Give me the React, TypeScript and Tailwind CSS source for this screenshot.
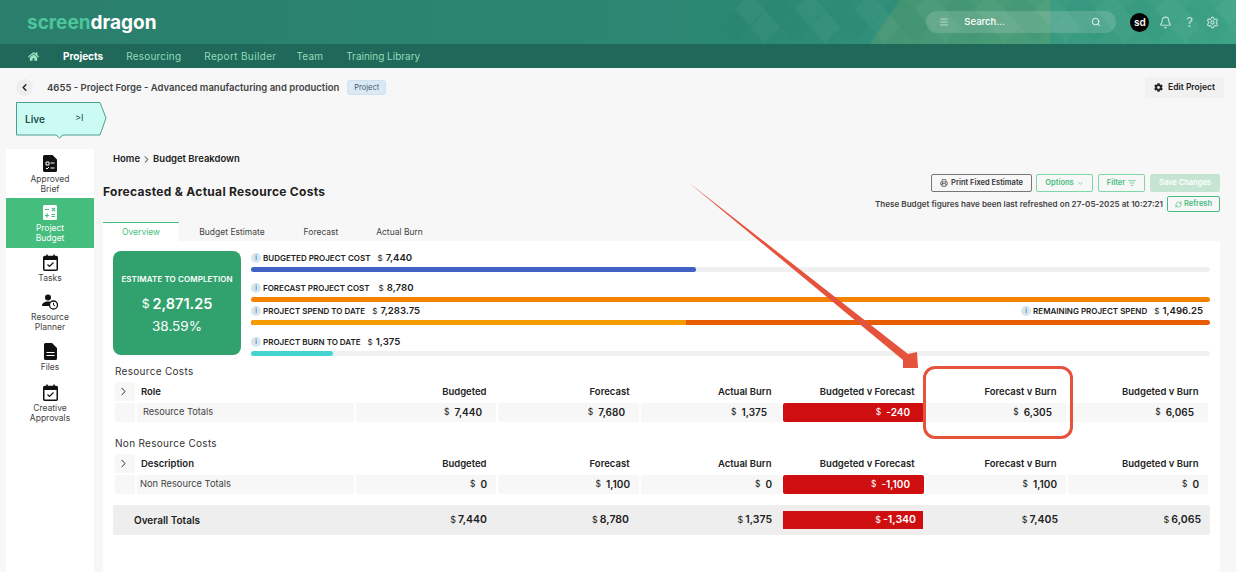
import { ChevronDown, ChevronLeft, ChevronRight, RefreshCw, Search, Bell, Settings, Menu, Printer, ListFilter } from 'lucide-react';
import { FaCog, FaHome } from 'react-icons/fa';

const gridCols = 'grid grid-cols-[20px_217px_140px_141px_140px_141px_140px_140px] gap-x-[2px]';

function BriefIcon() {
  return (
    <svg width="14" height="17" viewBox="0 0 14 17">
      <path d="M1.5 0H9.5L14 4.5V15.5A1.5 1.5 0 0 1 12.5 17H1.5A1.5 1.5 0 0 1 0 15.5V1.5A1.5 1.5 0 0 1 1.5 0Z" fill="#111" />
      <path d="M3 7h3v3H3zM7.5 8h4M3 13l1 1 2-2M7.5 13h4" stroke="#fff" strokeWidth="1" fill="none" />
    </svg>
  );
}

function CalcIcon() {
  return (
    <svg width="14" height="15" viewBox="0 0 14 15">
      <rect width="14" height="15" rx="1.5" fill="#fff" />
      <path d="M2 4.5h4M9 3l3 3M12 3l-3 3M2 10.5h4M4 8.5v4M8.5 9.5h3.5M8.5 11.5h3.5" stroke="#45bd7c" strokeWidth="1.2" fill="none" />
    </svg>
  );
}

function CalendarIcon() {
  return (
    <svg width="15" height="17" viewBox="0 0 15 17">
      <rect x="0.75" y="2.5" width="13.5" height="13.75" rx="1" fill="none" stroke="#111" strokeWidth="1.5" />
      <path d="M0.75 3h13.5v3H0.75z" fill="#111" />
      <path d="M4 0.5v3M11 0.5v3" stroke="#111" strokeWidth="1.5" />
      <path d="M4.5 10.5l2 2 4-4" stroke="#111" strokeWidth="1.2" fill="none" />
    </svg>
  );
}

function PlannerIcon() {
  return (
    <svg width="16" height="16" viewBox="0 0 16 16">
      <circle cx="6" cy="3.5" r="3" fill="#111" />
      <path d="M0 12c0-3 2.5-4.5 6-4.5 1 0 2 .1 2.6.4A5 5 0 0 0 7.2 12Z" fill="#111" />
      <circle cx="11.5" cy="11" r="4" fill="#fff" stroke="#111" strokeWidth="1.3" />
      <path d="M11.5 8.8V11l1.6 1" stroke="#111" strokeWidth="1" fill="none" />
    </svg>
  );
}

function FileIcon() {
  return (
    <svg width="13" height="17" viewBox="0 0 13 17">
      <path d="M1.5 0H8L13 5V15.5A1.5 1.5 0 0 1 11.5 17H1.5A1.5 1.5 0 0 1 0 15.5V1.5A1.5 1.5 0 0 1 1.5 0Z" fill="#111" />
      <path d="M2.5 9.5h8M2.5 12.5h8" stroke="#fff" strokeWidth="1.2" />
    </svg>
  );
}

const sideItems = [
  { label: ['Approved', 'Brief'], icon: <BriefIcon />, h: 'h-[49px]' },
  { label: ['Project', 'Budget'], icon: <CalcIcon />, h: 'h-[50px]', active: true },
  { label: ['Tasks'], icon: <CalendarIcon />, h: 'h-[39px]' },
  { label: ['Resource', 'Planner'], icon: <PlannerIcon />, h: 'h-[50px]' },
  { label: ['Files'], icon: <FileIcon />, h: 'h-[41px]' },
  { label: ['Creative', 'Approvals'], icon: <CalendarIcon />, h: 'h-[50px]' },
];

function Sidebar() {
  return (
    <div className="ml-[6px] w-[88px] h-[423px] bg-white shrink-0">
      {sideItems.map((item) => (
        <div
          key={item.label[0]}
          className={`${item.h} pt-[6px] flex flex-col items-center ${item.active ? 'bg-[#45bd7c] text-white' : 'text-[#444]'}`}
        >
          <div className="h-[17px] flex items-center justify-center">{item.icon}</div>
          <div className="mt-[2px] text-center text-[8.5px] leading-[10px]">
            {item.label.map((l) => (
              <div key={l}>{l}</div>
            ))}
          </div>
        </div>
      ))}
    </div>
  );
}

function Money({ value, size = 'text-[10px]', light = false, gap = 'gap-[5px]' }: { value: string; size?: string; light?: boolean; gap?: string }) {
  return (
    <span className={`inline-flex items-center font-semibold ${gap} ${size} ${light ? 'text-white' : 'text-[#222]'}`}>
      <span className="font-normal text-[0.85em]">$</span>
      {value}
    </span>
  );
}

function Info() {
  return (
    <span className="w-[10px] h-[10px] rounded-full bg-[#d5e6f3] text-[#33576f] text-[7px] leading-[10px] text-center shrink-0">i</span>
  );
}

function BarLabel({ label, value, mr = 'mr-[5px]' }: { label: string; value: string; mr?: string }) {
  return (
    <span className="flex items-center gap-[2px]">
      <Info />
      <span className={`text-[8px] font-semibold text-[#222] ${mr}`}>{label}</span>
      <Money value={value} size="text-[9.6px]" gap="gap-[3px]" />
    </span>
  );
}

function CostTable({ title, first, total, values, mt, pad }: { title: string; first: string; total: string; values: string[]; mt: string; pad: string }) {
  const heads = ['Budgeted', 'Forecast', 'Actual Burn', 'Budgeted v Forecast', 'Forecast v Burn', 'Budgeted v Burn'];
  return (
    <div className={mt}>
      <div className="h-[16px] text-[10px] leading-[16px] text-[#333] tracking-[0.3px]">{title}</div>
      <div className={`${gridCols} mt-[3px] h-[19px] items-center text-[9.5px] font-semibold text-[#222]`}>
        <div className="h-[19px] bg-[#f7f7f7] rounded-[2px] flex items-center justify-center">
          <ChevronRight size={13} strokeWidth={1.8} className="-ml-[3px]" />
        </div>
        <div className="pl-[4px] pt-[1px]">{first}</div>
        {heads.map((h) => (
          <div key={h} className="text-right pr-[9.5px] pt-[1px]">{h}</div>
        ))}
      </div>
      <div className={`${gridCols} mt-[2px] h-[19px] text-[9.3px]`}>
        <div className="bg-[#f7f7f7] rounded-[2px]" />
        <div className={`bg-[#f7f7f7] rounded-[2px] flex items-center pb-[1px] text-[#444] ${pad}`}>{total}</div>
        {values.map((v, i) =>
          i === 3 ? (
            <div key={i} className="bg-[#cf0e10] rounded-[2px] flex items-center justify-end pb-[1px] pr-[14px]">
              <Money value={v} light />
            </div>
          ) : (
            <div key={i} className={`bg-[#f7f7f7] rounded-[2px] flex items-center justify-end pb-[1px] ${v === '0' || v === '1,100' ? 'pr-[9px]' : 'pr-[14px]'}`}>
              <Money value={v} />
            </div>
          )
        )}
      </div>
    </div>
  );
}

// soft diamonds at the right of the header
const diamonds = Array.from({ length: 18 }, (_, i) => i);

function HeaderPattern() {
  return (
    <svg className="absolute left-[720px] top-0" width="516" height="44" viewBox="0 0 516 44">
      <path d="M180 0H330V44H150Z" fill="#8fae64" fillOpacity="0.22" />
      {diamonds.map((i) => (
        <g key={i}>
          <path d={`M${i * 30 + 15} 10Q${i * 30 + 22} 20 ${i * 30 + 30} 27Q${i * 30 + 22} 34 ${i * 30 + 15} 44Q${i * 30 + 8} 34 ${i * 30} 27Q${i * 30 + 8} 20 ${i * 30 + 15} 10Z`} fill={i % 2 ? '#ffffff' : '#0b5f4f'} fillOpacity={0.035} />
          <path d={`M${i * 30 + 30} -8Q${i * 30 + 37} 2 ${i * 30 + 45} 9Q${i * 30 + 37} 16 ${i * 30 + 30} 26Q${i * 30 + 23} 16 ${i * 30 + 15} 9Q${i * 30 + 23} 2 ${i * 30 + 30} -8Z`} fill={i % 2 ? '#0b5f4f' : '#ffffff'} fillOpacity={0.035} />
        </g>
      ))}
    </svg>
  );
}

export default function App() {
  const overall = ['7,440', '8,780', '1,375', '-1,340', '7,405', '6,065'];
  const overallPad = ['pr-[10px]', 'pr-[10px]', 'pr-[11px]', 'pr-[7px]', 'pr-[8px]', 'pr-[9px]'];
  return (
    <div className={'relative w-[1236px] h-[572px] overflow-hidden bg-[#f7f7f7] font-["Inter",sans-serif]'}>
      {/* header */}
      <div className="relative h-[44px] bg-gradient-to-r from-[#2a7f6c] via-[#2b8873] via-60% to-[#3fa487] flex items-center overflow-hidden">
        <HeaderPattern />
        <div className="relative ml-[27px] text-[19px] font-bold leading-none">
          <span className="text-[#4dc69b]">screen</span>
          <span className="text-white">dragon</span>
        </div>
        <div className="relative ml-auto mr-[17px] flex items-center">
          <div className="w-[190px] h-[22px] rounded-full bg-white/15 flex items-center pl-[13px] pr-[15px] text-white text-[9.5px] font-medium">
            <Menu size={10} className="text-white/70" />
            <span className="ml-[15px]">Search...</span>
            <Search size={10} className="ml-auto" />
          </div>
          <div className="ml-[14px] w-[19px] h-[19px] rounded-full bg-black text-white text-[10px] font-semibold flex items-center justify-center">sd</div>
          <Bell size={13} className="ml-[10px] text-white/70" />
          <span className="ml-[14px] text-[13px] text-white/70 leading-none">?</span>
          <Settings size={13} className="ml-[13px] text-white/70" />
        </div>
      </div>
      {/* nav */}
      <div className="h-[24px] bg-[#20695a] flex items-center pl-[28px] text-[10px] text-[#8fdcb8]">
        <FaHome size={11} className="text-[#9be6c2]" />
        <span className="ml-[24px] font-bold text-white">Projects</span>
        <span className="ml-[23px] tracking-[0.2px]">Resourcing</span>
        <span className="ml-[23px] tracking-[0.35px]">Report Builder</span>
        <span className="ml-[20px] tracking-[0.2px]">Team</span>
        <span className="ml-[23px]">Training Library</span>
      </div>

      {/* project title */}
      <div className="mt-[9px] h-[21px] flex items-center pl-[16px] pr-[12px]">
        <div className="w-[17px] h-[17px] rounded-full bg-[#eeeeee] flex items-center justify-center">
          <ChevronLeft size={11} strokeWidth={3} className="text-[#222]" />
        </div>
        <span className="ml-[14px] mt-[1px] text-[9.5px] font-semibold text-[#444]">4655 - Project Forge - Advanced manufacturing and production</span>
        <span className="ml-[8px] h-[15px] px-[6px] rounded-[3px] bg-[#dbe9f5] border border-[#cfe0ef] text-[7.5px] leading-[13px] text-[#3d5a73]">Project</span>
        <button className="ml-auto w-[79px] h-[21px] rounded-[2px] bg-[#f1f1f1] flex items-center justify-center gap-[5px] text-[8.5px] font-semibold text-[#222]">
          <FaCog size={9} />
          Edit Project
        </button>
      </div>

      {/* status chevron */}
      <div className="relative mt-[4px] ml-[16px] w-[91px] h-[33px]">
        <svg className="absolute inset-0 overflow-visible" width="91" height="33" viewBox="0 0 91 33">
          <path d="M0.5 0.5H84L90 16L84 33H47L43.5 36L40 33H0.5Z" fill="#cbfbf3" stroke="#4da08d" strokeWidth="1" />
        </svg>
        <span className="absolute left-[9px] top-[10px] text-[10px] font-semibold text-[#1d4f47]">Live</span>
        <span className="absolute left-[59px] top-[9px] text-[9px] text-[#1d4f47]">&gt;I</span>
      </div>

      <div className="mt-[14px] flex">
        <Sidebar />
        <div className="ml-[9px] w-[1117px]">
          <div className="pl-[10px] h-[20px] flex items-center gap-[1px] text-[9.5px] font-semibold text-[#222]">
            Home <ChevronRight size={11} /> Budget Breakdown
          </div>
          {/* title + actions */}
          <div className="mt-[5px] h-[38px] flex">
            <div className="pt-[9px] text-[12px] font-bold text-[#222] tracking-[0.3px]">Forecasted &amp; Actual Resource Costs</div>
            <div className="ml-auto flex flex-col items-end">
              <div className="flex text-[7.5px] font-semibold">
                <button className="w-[101px] h-[18px] rounded-[2px] border border-[#777] flex items-center justify-center gap-[3px] text-[#333]">
                  <Printer size={8} />
                  Print Fixed Estimate
                </button>
                <button className="ml-[4px] w-[57px] h-[18px] rounded-[2px] border border-[#7fd6a6] flex items-center justify-center gap-[3px] text-[#45bd7c]">
                  Options <ChevronDown size={7} />
                </button>
                <button className="ml-[5px] w-[47px] h-[18px] rounded-[2px] border border-[#7fd6a6] flex items-center justify-center gap-[3px] text-[#45bd7c]">
                  Filter <ListFilter size={8} />
                </button>
                <button className="ml-[5px] w-[70px] h-[18px] rounded-[2px] bg-[#c5e5d2] text-white">Save Changes</button>
              </div>
              <div className="mt-[4px] flex items-center gap-[4px] text-[8.1px] font-semibold text-[#444]">
                These Budget figures have been last refreshed on 27-05-2025 at 10:27:21
                <button className="w-[53px] h-[16px] rounded-[2px] border border-[#45bd7c] flex items-center justify-center gap-[2px] text-[7.5px] text-[#45bd7c]">
                  <RefreshCw size={7} /> Refresh
                </button>
              </div>
            </div>
          </div>
          {/* tabs */}
          <div className="mt-[10px] h-[19px] flex text-[8.5px] text-[#444]">
            <div className="w-[76px] pt-[1px] border-t border-[#45bd7c] bg-white text-[#45bd7c] flex items-center justify-center">Overview</div>
            <div className="w-[106px] pt-[1px] flex items-center justify-center">Budget Estimate</div>
            <div className="w-[72px] pt-[1px] flex items-center justify-center">Forecast</div>
            <div className="w-[85px] pt-[1px] flex items-center justify-center">Actual Burn</div>
          </div>
          {/* panel */}
          <div className="bg-white h-[331px] pl-[10px] pr-[10px] pt-[10px]">
            <div className="flex">
              <div className="w-[128px] h-[104px] rounded-[8px] bg-[#31a26e] text-white flex flex-col items-center pt-[22px]">
                <div className="text-[8px] font-semibold tracking-[0.1px]">ESTIMATE TO COMPLETION</div>
                <div className="mt-[5px]"><Money value="2,871.25" size="text-[14.5px]" light gap="gap-[3px]" /></div>
                <div className="mt-[2px] text-[13.5px] leading-[18px]">38.59%</div>
              </div>
              <div className="ml-[10px] flex-1">
                <div className="h-[14px] flex items-center"><BarLabel label="BUDGETED PROJECT COST" value="7,440" /></div>
                <div className="mt-[2px] h-[5px] rounded-full bg-[#f0f0f0]">
                  <div className="h-full rounded-full bg-[#3f62c4]" style={{ width: '46.4%' }} />
                </div>
                <div className="mt-[9px] h-[14px] flex items-center"><BarLabel label="FORECAST PROJECT COST" value="8,780" mr="mr-[7px]" /></div>
                <div className="mt-[2px] h-[5px] rounded-full bg-[#f58200]" />
                <div className="mt-[2px] h-[15px] flex items-center justify-between pr-[7px]">
                  <BarLabel label="PROJECT SPEND TO DATE" value="7,283.75" />
                  <BarLabel label="REMAINING PROJECT SPEND" value="1,496.25" />
                </div>
                <div className="mt-[1px] h-[5px] rounded-full bg-[#e85d04] overflow-hidden">
                  <div className="h-full bg-[#f59a00]" style={{ width: '45.4%' }} />
                </div>
                <div className="mt-[10px] h-[14px] flex items-center"><BarLabel label="PROJECT BURN TO DATE" value="1,375" /></div>
                <div className="mt-[2px] h-[5px] rounded-full bg-[#f0f0f0]">
                  <div className="h-full rounded-full bg-[#45d3d0]" style={{ width: '8.5%' }} />
                </div>
              </div>
            </div>
            <div className="pl-[2px]">
              <CostTable mt="mt-[7px]" title="Resource Costs" first="Role" total="Resource Totals" pad="pl-[6px]" values={['7,440', '7,680', '1,375', '-240', '6,305', '6,065']} />
              <CostTable mt="mt-[13px]" title="Non Resource Costs" first="Description" total="Non Resource Totals" pad="pl-[3px]" values={['0', '1,100', '0', '-1,100', '1,100', '0']} />
            </div>
            <div className="mt-[11px] h-[30px] bg-[#eeeeee] rounded-[2px] grid grid-cols-[241px_143px_142px_144px_140px_143px_144px] items-center">
              <div className="pl-[21px] text-[10px] font-semibold text-[#222]">Overall Totals</div>
              {overall.map((v, i) =>
                i === 3 ? (
                  <div key={v} className={`h-[18px] bg-[#cf0e10] flex items-center justify-end ${overallPad[i]}`}>
                    <Money value={v} size="text-[10.5px]" light gap="gap-[2px]" />
                  </div>
                ) : (
                  <div key={v} className={`flex justify-end ${overallPad[i]}`}>
                    <Money value={v} size="text-[10.5px]" gap="gap-[2px]" />
                  </div>
                )
              )}
            </div>
          </div>
        </div>
      </div>

      {/* annotation over the page */}
      <svg className="absolute left-0 top-0 pointer-events-none" width="1236" height="572" viewBox="0 0 1236 572">
        <polygon points="688,182 908,354 917,352 918,368 903,368 903,360" fill="#e5533d" />
      </svg>
      <div className="absolute left-[923px] top-[366px] w-[150px] h-[73px] rounded-[12px] border-[3px] border-[#e5533d]" />
    </div>
  );
}
